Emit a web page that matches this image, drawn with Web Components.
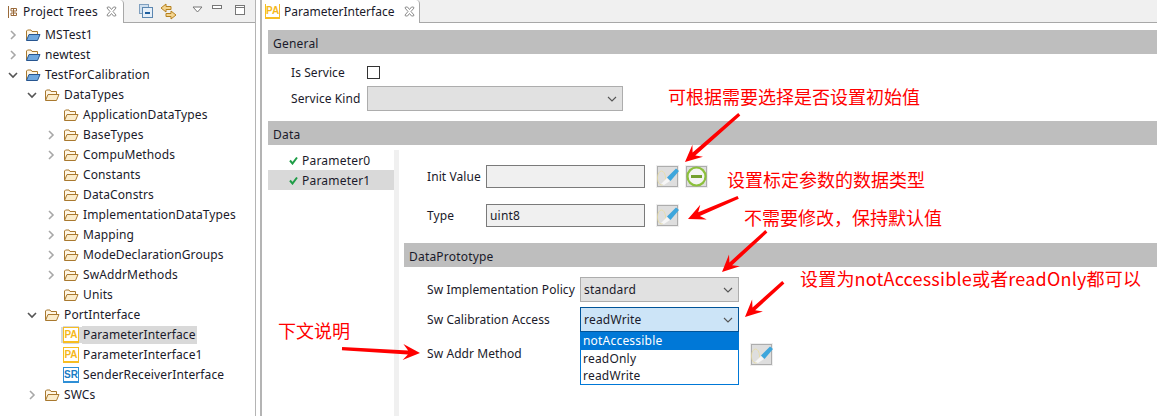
<!DOCTYPE html>
<html>
<head>
<meta charset="utf-8">
<style>
    html, body { margin: 0; padding: 0; background: #fff; overflow: hidden; }
    body { font: 12px "Noto Sans", "Noto Sans CJK SC", sans-serif; color: #1a1a2a; width: 1157px; height: 416px; position: relative; }
    #app { display: flex; height: 416px; }
</style>
</head>
<body>
<div id="app">
    <project-trees></project-trees>
    <editor-pane></editor-pane>
</div>
<note-layer></note-layer>

<script>
const CLOSE_X = `<svg width="11" height="11" viewBox="0 0 11 11"><path d="M1.5 1 L3.5 1 L5.5 3.5 L7.5 1 L9.5 1 L10 2 L7 5.5 L10 9 L9.5 10 L7.5 10 L5.5 7.5 L3.5 10 L1.5 10 L1 9 L4 5.5 L1 2 Z" fill="#fff" stroke="#8c8c8c"/></svg>`;

class TreeRow extends HTMLElement {
    constructor() {
        super();
        const depth = Number(this.getAttribute('depth') || 0);
        const twist = this.getAttribute('twist') || '';
        const icon = this.getAttribute('icon') || 'folder';
        const shadow = this.attachShadow({ mode: 'open' });
        shadow.innerHTML = `
            <style>
                :host { display: block; height: 20px; }
                .row { display: flex; align-items: center; height: 20px; padding-left: ${6 + depth * 19}px; }
                .twist { width: 13px; height: 20px; display: flex; align-items: center; justify-content: center; margin-right: 6px; }
                .icon { width: 16px; height: 16px; margin-right: 3px; flex: none; }
                .label { height: 18px; line-height: 18px; padding: 0 1px; white-space: nowrap; letter-spacing: 0.12px; }
                :host([selected]) .label { background: #d9d9d9; }
                :host([selected]) .icon { background: #d9d9d9; box-shadow: 3px 0 0 #d9d9d9, -2px 0 0 #d9d9d9, 0 1px 0 #d9d9d9, 0 -1px 0 #d9d9d9; }
                .badge { box-sizing: border-box; width: 16px; height: 16px; border: 1.5px solid; border-top-width: 1px; border-bottom-width: 2px; font: bold 10px/13px "Liberation Sans", sans-serif; text-align: center; overflow: hidden; background: #fff; }
                .pa { color: #f5b81c; border-color: #f7bd22; }
                .sr { color: #1b7cc4; border-color: #2f8fd6; }
            </style>
            <div class="row">
                <span class="twist">${this.twistSvg(twist)}</span>
                <span class="icon">${this.iconMarkup(icon)}</span>
                <span class="label"><slot></slot></span>
            </div>
        `;
    }

    twistSvg(twist) {
        if (twist === 'open') return `<svg width="10" height="10" viewBox="0 0 10 10"><path d="M1 3 L5 7 L9 3" fill="none" stroke="#555" stroke-width="1.6"/></svg>`;
        if (twist === 'closed') return `<svg width="10" height="10" viewBox="0 0 10 10"><path d="M3 1 L7 5 L3 9" fill="none" stroke="#a8a8a8" stroke-width="1.6"/></svg>`;
        return '';
    }

    iconMarkup(icon) {
        if (icon === 'pa') return `<div class="badge pa">PA</div>`;
        if (icon === 'sr') return `<div class="badge sr">SR</div>`;
        const front = icon === 'project' ? '#6fa8e0' : '#fbeccb';
        const stroke = icon === 'project' ? '#27558f' : '#a9792f';
        return `<svg width="16" height="16" viewBox="0 0 16 16">
            <path d="M1.5 13 V4 L2.5 3 H6 L7 4.5 H12.5 V7" fill="#fff6e4" stroke="#a9792f"/>
            <path d="M1.5 13.5 L4 7.5 H15 L12.5 13.5 Z" fill="${front}" stroke="${stroke}"/>
        </svg>`;
    }
}

class ProjectTrees extends HTMLElement {
    constructor() {
        super();
        const rows = [
            [0, 'closed', 'project', 'MSTest1'],
            [0, 'closed', 'project', 'newtest'],
            [0, 'open', 'project', 'TestForCalibration'],
            [1, 'open', 'folder', 'DataTypes'],
            [2, '', 'folder', 'ApplicationDataTypes'],
            [2, 'closed', 'folder', 'BaseTypes'],
            [2, 'closed', 'folder', 'CompuMethods'],
            [2, '', 'folder', 'Constants'],
            [2, '', 'folder', 'DataConstrs'],
            [2, 'closed', 'folder', 'ImplementationDataTypes'],
            [2, 'closed', 'folder', 'Mapping'],
            [2, 'closed', 'folder', 'ModeDeclarationGroups'],
            [2, 'closed', 'folder', 'SwAddrMethods'],
            [2, '', 'folder', 'Units'],
            [1, 'open', 'folder', 'PortInterface'],
            [2, '', 'pa', 'ParameterInterface', true],
            [2, '', 'pa', 'ParameterInterface1'],
            [2, '', 'sr', 'SenderReceiverInterface'],
            [1, 'closed', 'folder', 'SWCs'],
        ];
        const shadow = this.attachShadow({ mode: 'open' });
        shadow.innerHTML = `
            <style>
                :host { display: block; width: 255px; flex: none; border-right: 1px solid #b4b4b4; }
                .bar { display: flex; align-items: center; height: 23px; background: #f0f0f0; }
                .tab { display: flex; align-items: center; gap: 6px; width: 124px; box-sizing: border-box; height: 23px; padding-left: 7px; background: #fff; border-right: 1px solid #a8a8a8; border-radius: 0 4px 0 0; }
                .tab span { font-size: 12px; white-space: nowrap; letter-spacing: 0.2px; }
                .tab span + svg { margin-left: 2px; }
                .tools { display: flex; align-items: center; padding-left: 15px; flex: 1; border-bottom: 1px solid #a8a8a8; height: 22px; }
                .tree { padding-top: 2px; }
            </style>
            <div class="bar">
                <div class="tab">
                    <svg width="10" height="12" viewBox="0 0 10 12"><path d="M1.5 0 V12 M4 2.5 H9.5 V5 H4 Z M4 7 H9.5 V9.5 H4 Z M6.5 2.5 V9.5" fill="none" stroke="#9a6a3a"/></svg>
                    <span>Project Trees</span>
                    ${CLOSE_X}
                </div>
                <div class="tools">
                    <svg width="14" height="14" viewBox="0 0 14 14"><rect x="0.5" y="0.5" width="9" height="9" fill="#cfdfee" stroke="#7f9fbf"/><rect x="3.5" y="3.5" width="10" height="10" fill="#e6eff8" stroke="#5b86b0"/><path d="M6 9 H11" stroke="#1f5f9f" stroke-width="2"/></svg>
                    <svg style="margin-left:7px" width="17" height="17" viewBox="0 0 17 17"><path d="M1 5 L6 1 V3.5 H11 V6.5 H6 V9 Z M16 12 L11 8 V10.5 H6 V13.5 H11 V16 Z" fill="#f3d48f" stroke="#b5801f"/></svg>
                    <svg style="margin:0 0 4px 15px" width="11" height="7" viewBox="0 0 11 7"><path d="M1 1 H10 L5.5 6 Z" fill="#fff" stroke="#777"/></svg>
                    <svg style="margin:0 0 7px 9px" width="11" height="5" viewBox="0 0 11 5"><rect x="0.5" y="0.5" width="9" height="3" fill="#fff" stroke="#777"/></svg>
                    <svg style="margin:0 0 2px 12px" width="11" height="11" viewBox="0 0 11 11"><rect x="0.5" y="0.5" width="9" height="9" fill="#fff" stroke="#777"/><path d="M0.5 2.5 H9.5" stroke="#777"/></svg>
                </div>
            </div>
            <div class="tree">
                ${rows.map(([d, t, i, l, s]) => `<tree-row depth="${d}" twist="${t}" icon="${i}"${s ? ' selected' : ''}>${l}</tree-row>`).join('')}
            </div>
        `;
    }
}

class SectionBar extends HTMLElement {
    constructor() {
        super();
        this.attachShadow({ mode: 'open' }).innerHTML = `
            <style>
                :host { display: block; height: 24px; line-height: 28px; overflow: hidden; background: #bebebe; padding-left: 5px; letter-spacing: 0.2px; }
            </style>
            <slot></slot>
        `;
    }
}

class EditButton extends HTMLElement {
    constructor() {
        super();
        this.attachShadow({ mode: 'open' }).innerHTML = `
            <style>
                :host { display: block; width: 23px; height: 23px; flex: none; }
                svg { display: block; }
            </style>
            <svg width="23" height="23" viewBox="0 0 23 23">
                <rect x="0.5" y="0.5" width="22" height="22" fill="#e1e1e1" stroke="#efefef"/>
                <rect x="1.5" y="1.5" width="20" height="20" fill="#dedede" stroke="#adadad"/>
                <ellipse cx="5.5" cy="13" rx="4" ry="7" fill="none" stroke="#e8dca0" stroke-width="0.8"/>
                <path d="M5 19 L11 13 L14 16 L8 20 Z" fill="#f6f6f6"/>
                <path d="M11 12.5 L20 3.5 L23 6 L14.5 16 Z" fill="#3ea6dc"/>
            </svg>
        `;
    }
}

class MinusButton extends HTMLElement {
    constructor() {
        super();
        this.attachShadow({ mode: 'open' }).innerHTML = `
            <style>
                :host { display: block; width: 23px; height: 23px; flex: none; }
                svg { display: block; }
            </style>
            <svg width="23" height="23" viewBox="0 0 23 23">
                <rect x="0.5" y="0.5" width="22" height="22" fill="#e1e1e1" stroke="#efefef"/>
                <rect x="1.5" y="1.5" width="20" height="20" fill="#dedede" stroke="#adadad"/>
                <circle cx="11.5" cy="11.5" r="9" fill="#f4f4f4" stroke="#8cc03c" stroke-width="2.2"/>
                <path d="M6 11.5 H17" stroke="#74a02e" stroke-width="3"/>
            </svg>
        `;
    }
}

class TextField extends HTMLElement {
    constructor() {
        super();
        this.attachShadow({ mode: 'open' }).innerHTML = `
            <style>
                :host { display: block; box-sizing: border-box; width: 159px; height: 23px; line-height: 21px; padding-left: 3px; border: 1px solid #7a7a7a; background: #f0f0f0; letter-spacing: 0.2px; }
            </style>
            <slot></slot>
        `;
    }
}

class ComboBox extends HTMLElement {
    constructor() {
        super();
        this.attachShadow({ mode: 'open' }).innerHTML = `
            <style>
                :host { display: flex; box-sizing: border-box; align-items: center; justify-content: space-between; width: 159px; height: 25px; padding: 0 5px 0 3px; border: 1px solid #adadad; background: #e1e1e1; letter-spacing: 0.2px; position: relative; }
                :host([focus]) { background: #cce4f7; border-color: #005499; }
                svg { flex: none; }
            </style>
            <span><slot></slot></span>
            <svg width="10" height="6" viewBox="0 0 10 6"><path d="M1 1 L5 5 L9 1" fill="none" stroke="#555" stroke-width="1.1"/></svg>
            <slot name="popup"></slot>
        `;
    }
}

class ComboPopup extends HTMLElement {
    constructor() {
        super();
        this.attachShadow({ mode: 'open' }).innerHTML = `
            <style>
                :host { display: block; position: absolute; left: -1px; top: 24px; width: 159px; box-sizing: border-box; height: 53px; border: 1px solid #0078d7; border-top: 0; background: #fff; z-index: 2; }
                .item { height: 17px; line-height: 17px; padding-left: 2px; letter-spacing: 0.2px; }
                .item.on { height: 18px; background: #0078d7; color: #fff; }
            </style>
            <div class="item on">notAccessible</div>
            <div class="item">readOnly</div>
            <div class="item">readWrite</div>
        `;
    }
}

class EditorPane extends HTMLElement {
    constructor() {
        super();
        const template = document.createElement('template');
        template.innerHTML = `
            <style>
                :host { display: block; flex: 1; margin-left: 4px; border-left: 2px solid #b4b4b4; height: 416px; overflow: hidden; }
                .tabs { display: flex; height: 23px; background: #f0f0f0; }
                .tab { display: flex; align-items: center; box-sizing: border-box; width: 158px; height: 23px; padding-left: 3px; gap: 4px; background: #fff; border-right: 1px solid #a8a8a8; border-radius: 0 4px 0 0; }
                .tab .pa { box-sizing: border-box; width: 15px; height: 15px; border: 1px solid #f7bd22; border-top-width: 0; border-bottom-width: 2px; font: bold 10px/13px "Liberation Sans", sans-serif; color: #f5b81c; text-align: center; background: #fff; }
                .tab svg { margin-left: 6px; }
                .fill { flex: 1; border-bottom: 1px solid #a8a8a8; }
                .body { padding: 7px 0 0 6px; }
                .general { height: 67px; padding: 6px 0 0 23px; box-sizing: border-box; }
                .row { display: flex; align-items: center; }
                .row .label { width: 76px; white-space: nowrap; letter-spacing: 0.08px; }
                .check { width: 13px; height: 13px; box-sizing: border-box; border: 1px solid #333; background: #fff; }
                .general .r1 { height: 25px; }
                .general .r2 { margin-top: 1px; }
                .general combo-box { width: 256px; }
                .data { display: flex; height: 271px; }
                .params { width: 126px; flex: none; padding-top: 5px; }
                .param { display: flex; align-items: center; gap: 4px; height: 20px; padding-left: 21px; letter-spacing: 0.2px; }
                .param.sel { background: #d9d9d9; }
                .strip { width: 5px; flex: none; background: #f0f0f0; margin-top: 5px; }
                .detail { flex: 1; padding: 20px 0 0 5px; }
                .fields { padding-left: 23px; }
                .fields .row { gap: 11px; }
                .fields .row .label { width: 59px; margin-right: -11px; }
                .fields .f2 { margin-top: 16px; margin-bottom: 16px; }
                .fields minus-button { margin-left: -5px; }
                .proto { padding: 10px 0 0 23px; }
                .proto .label { width: 153px; }
                .proto .p2 { margin-top: 5px; }
                .proto .p3 { height: 23px; margin-top: 11px; }
                .proto .p3 .label { width: 323px; padding-bottom: 2px; }
            </style>
            <div class="tabs">
                <div class="tab">
                    <div class="pa">PA</div>
                    <span>ParameterInterface</span>
                    ${CLOSE_X}
                </div>
                <div class="fill"></div>
            </div>
            <div class="body">
                <section-bar>General</section-bar>
                <div class="general">
                    <div class="row r1"><span class="label">Is Service</span><span class="check"></span></div>
                    <div class="row r2"><span class="label">Service Kind</span><combo-box></combo-box></div>
                </div>
                <section-bar>Data</section-bar>
                <div class="data">
                    <div class="params">
                        <div class="param">${this.tick()}Parameter0</div>
                        <div class="param sel">${this.tick()}Parameter1</div>
                    </div>
                    <div class="strip"></div>
                    <div class="detail">
                        <div class="fields">
                            <div class="row"><span class="label">Init Value</span><text-field></text-field><edit-button></edit-button><minus-button></minus-button></div>
                            <div class="row f2"><span class="label">Type</span><text-field>uint8</text-field><edit-button></edit-button></div>
                        </div>
                        <section-bar>DataPrototype</section-bar>
                        <div class="proto">
                            <div class="row"><span class="label">Sw Implementation Policy</span><combo-box>standard</combo-box></div>
                            <div class="row p2"><span class="label">Sw Calibration Access</span><combo-box focus>readWrite<combo-popup slot="popup"></combo-popup></combo-box></div>
                            <div class="row p3"><span class="label">Sw Addr Method</span><edit-button></edit-button></div>
                        </div>
                    </div>
                </div>
            </div>
        `;
        this.attachShadow({ mode: 'open' }).appendChild(template.content.cloneNode(true));
    }

    tick() {
        return `<svg width="9" height="9" viewBox="0 0 9 9"><path d="M1 4.5 L3.5 7.5 L8 1.5" fill="none" stroke="#1f9d47" stroke-width="2"/></svg>`;
    }
}

class NoteLayer extends HTMLElement {
    constructor() {
        super();
        const notes = [
            [668, 96, '可根据需要选择是否设置初始值', 0],
            [727, 179, '设置标定参数的数据类型', 0],
            [744, 217, '不需要修改，保持默认值', 0],
            [800, 278, '设置为notAccessible或者readOnly都可以', 0.2],
            [278, 330, '下文说明', 0],
        ];
        // from x, from y, tip x, tip y
        const arrows = [
            [739, 114, 685, 162],
            [738, 197, 688, 219],
            [766, 231, 722, 272],
            [783, 282, 745, 317],
            [342, 349, 420, 353],
        ];
        this.attachShadow({ mode: 'open' }).innerHTML = `
            <style>
                :host { display: block; position: absolute; left: 0; top: 0; width: 1157px; height: 416px; pointer-events: none; z-index: 5; }
                span { position: absolute; height: 24px; margin-top: -12px; color: #f00; font: 18px/24px "Noto Sans CJK SC", "Noto Sans", sans-serif; white-space: nowrap; }
                svg { position: absolute; left: 0; top: 0; }
            </style>
            ${notes.map(([x, y, t, ls]) => `<span style="left:${x}px;top:${y}px;letter-spacing:${ls}px">${t}</span>`).join('')}
            <svg width="1157" height="416">${arrows.map(a => this.arrow(...a)).join('')}</svg>
        `;
    }

    arrow(x1, y1, x2, y2) {
        const len = Math.hypot(x2 - x1, y2 - y1);
        const ux = (x2 - x1) / len, uy = (y2 - y1) / len;
        const px = -uy, py = ux;
        const bx = x2 - ux * 17, by = y2 - uy * 17;
        const nx = x2 - ux * 12, ny = y2 - uy * 12;
        const pts = [
            [x2, y2],
            [bx + px * 8, by + py * 8],
            [nx + px * 2, ny + py * 2],
            [x1 + px * 1.2, y1 + py * 1.2],
            [x1 - px * 2, y1 - py * 2],
            [nx - px * 2, ny - py * 2],
            [bx - px * 8, by - py * 8],
        ];
        return `<polygon points="${pts.map(p => p[0].toFixed(1) + ',' + p[1].toFixed(1)).join(' ')}" fill="#f00"/>`;
    }
}

customElements.define('tree-row', TreeRow);
customElements.define('project-trees', ProjectTrees);
customElements.define('section-bar', SectionBar);
customElements.define('edit-button', EditButton);
customElements.define('minus-button', MinusButton);
customElements.define('text-field', TextField);
customElements.define('combo-box', ComboBox);
customElements.define('combo-popup', ComboPopup);
customElements.define('editor-pane', EditorPane);
customElements.define('note-layer', NoteLayer);
</script>
</body>
</html>
